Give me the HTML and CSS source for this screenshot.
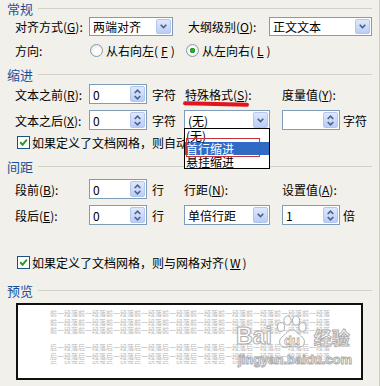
FILE: index.html
```html
<!DOCTYPE html>
<html lang="zh-CN">
  <head>
    <meta charset="UTF-8" />
    <link rel="stylesheet" href="styles.css">
    <title>段落</title>
  </head>
  <body>
    <div class="dlg">
      <div class="title">常规</div>
      <div class="row gen1">
        <span class="lbl">对齐方式(<u>G</u>):</span>
        <div class="select w84"><span>两端对齐</span><i class="drop"><svg width="7" height="5"><path d="M0.7 0.7 L3.5 3.6 L6.3 0.7" /></svg></i></div>
        <span class="lbl2">大纲级别(<u>O</u>):</span>
        <div class="select w103"><span>正文文本</span><i class="drop"><svg width="7" height="5"><path d="M0.7 0.7 L3.5 3.6 L6.3 0.7" /></svg></i></div>
      </div>
      <div class="row gen2">
        <span class="lbl">方向:</span>
        <span class="radio r1"><i></i>从右向左(<u>F</u>)</span>
        <span class="radio on"><i></i>从左向右(<u>L</u>)</span>
      </div>

      <div class="title t-indent">缩进</div>
      <div class="grid indent">
        <span>文本之前(<u>R</u>):</span>
        <div class="spin"><span>0</span><i class="arrows"><svg width="7" height="11"><path d="M0.7 4 L3.5 1.2 L6.3 4 M0.7 7 L3.5 9.8 L6.3 7" /></svg></i></div>
        <span class="unit">字符</span>
        <span class="mark">特殊格式(<u>S</u>):</span>
        <span class="wide">度量值(<u>Y</u>):</span>

        <span>文本之后(<u>X</u>):</span>
        <div class="spin"><span>0</span><i class="arrows"><svg width="7" height="11"><path d="M0.7 4 L3.5 1.2 L6.3 4 M0.7 7 L3.5 9.8 L6.3 7" /></svg></i></div>
        <span class="unit">字符</span>
        <div class="combo">
          <div class="select"><span>(无)</span><i class="drop"><svg width="7" height="5"><path d="M0.7 0.7 L3.5 3.6 L6.3 0.7" /></svg></i></div>
          <ul class="list">
            <li>(无)</li>
            <li class="sel">首行缩进</li>
            <li>悬挂缩进</li>
          </ul>
          <div class="redbox"></div>
        </div>
        <div class="spin"><span></span><i class="arrows"><svg width="7" height="11"><path d="M0.7 4 L3.5 1.2 L6.3 4 M0.7 7 L3.5 9.8 L6.3 7" /></svg></i></div>
        <span class="unit u2">字符</span>
      </div>
      <div class="check c1"><i><svg width="9" height="9"><path d="M1.2 4.2 L3.6 6.8 L7.8 1.6" /></svg></i><span class="clip">如果定义了文档网格，则自动调整右缩进(<u>D</u>)</span></div>

      <div class="title t-space">间距</div>
      <div class="grid spacing">
        <span>段前(<u>B</u>):</span>
        <div class="spin"><span>0</span><i class="arrows"><svg width="7" height="11"><path d="M0.7 4 L3.5 1.2 L6.3 4 M0.7 7 L3.5 9.8 L6.3 7" /></svg></i></div>
        <span class="unit">行</span>
        <span>行距(<u>N</u>):</span>
        <span class="wide">设置值(<u>A</u>):</span>

        <span>段后(<u>E</u>):</span>
        <div class="spin"><span>0</span><i class="arrows"><svg width="7" height="11"><path d="M0.7 4 L3.5 1.2 L6.3 4 M0.7 7 L3.5 9.8 L6.3 7" /></svg></i></div>
        <span class="unit">行</span>
        <div class="select"><span>单倍行距</span><i class="drop"><svg width="7" height="5"><path d="M0.7 0.7 L3.5 3.6 L6.3 0.7" /></svg></i></div>
        <div class="spin"><span>1</span><i class="arrows"><svg width="7" height="11"><path d="M0.7 4 L3.5 1.2 L6.3 4 M0.7 7 L3.5 9.8 L6.3 7" /></svg></i></div>
        <span class="unit u2">倍</span>
      </div>
      <div class="check c2"><i><svg width="9" height="9"><path d="M1.2 4.2 L3.6 6.8 L7.8 1.6" /></svg></i>如果定义了文档网格，则与网格对齐(<u>W</u>)</div>

      <div class="title t-preview">预览</div>
      <div class="preview">
        <div class="lines">
          <p>前一段落前一段落前一段落前一段落前一段落前一段落前一段落前一段落前一段落前一段落</p>
          <p>前一段落前一段落前一段落前一段落前一段落前一段落前一段落前一段落前一段落前一段落</p>
          <p>前一段落前一段落前一段落前一段落前一段落前一段落前一段落前一段落前一段落前一段落</p>
        </div>
        <div class="lines after">
          <p>后一段落后一段落后一段落后一段落后一段落后一段落后一段落后一段落后一段落后一段落</p>
          <p>后一段落后一段落后一段落后一段落后一段落后一段落后一段落后一段落后一段落后一段落</p>
          <p>后一段落后一段落后一段落后一段落后一段落后一段落后一段落后一段落后一段落后一段落</p>
        </div>
        <!-- watermark over the preview -->
        <div class="wm">
          <div class="wm-top">
            <span class="bai">Bai</span>
            <svg class="paw" width="34" height="33" viewBox="0 0 34 33">
              <ellipse cx="6" cy="12" rx="3.6" ry="4.4" />
              <ellipse cx="12.5" cy="5.5" rx="3.6" ry="4.6" />
              <ellipse cx="21" cy="5.5" rx="3.6" ry="4.6" />
              <ellipse cx="27.5" cy="12" rx="3.6" ry="4.4" />
              <path d="M17 15 C21 15 23 19 27 22 C31 25 30 32 24 32 C21 32 19 31 17 31 C15 31 13 32 10 32 C4 32 3 25 7 22 C11 19 13 15 17 15 Z" />
              <text x="17" y="30" text-anchor="middle">du</text>
            </svg>
            <span class="jy">经验</span>
          </div>
          <div class="wm-url">jingyan.baidu.com</div>
        </div>
      </div>
    </div>
  </body>
</html>
```

FILE: styles.css
```css
* {
  box-sizing: border-box;
}
body {
  margin: 0;
  background-color: #f1f0ea;
  font: 12px "Noto Sans CJK SC", "Liberation Sans", sans-serif;
  color: #000;
}
u {
  text-decoration: underline;
}
.dlg {
  width: 380px;
  height: 386px;
  border-right: 1px solid #d2d0c6;
  position: relative;
  overflow: hidden;
}

/* group titles with the rule to the right */
.title {
  display: flex;
  align-items: center;
  height: 17px;
  padding-left: 7px;
  color: #1b4f9c;
  font-size: 13px;
}
.title::after {
  content: "";
  flex: 1;
  border-top: 1px solid #d3d1c6;
  margin: 0 7px 0 5px;
}
.t-indent {
  margin-top: 6px;
}
.t-space {
  margin-top: 7px;
}
.t-preview {
  margin-top: 11px;
}

.row {
  display: flex;
  align-items: center;
  padding-left: 15px;
}
.gen1 {
  height: 19px;
}
.gen1 .lbl {
  width: 74px;
}
.lbl2 {
  width: 81px;
  margin-left: 15px;
}
.w84 {
  width: 84px;
}
.w103 {
  width: 103px;
}
.gen2 {
  height: 20px;
  margin-top: 4px;
}
.gen2 .lbl {
  width: 74px;
}

/* controls */
.select,
.spin {
  height: 100%;
  border: 1px solid #7f9db9;
  background-color: #fff;
  display: flex;
  align-items: center;
  padding: 1px 1px 1px 3px;
}
.select span,
.spin span {
  flex: 1;
  white-space: nowrap;
}
.drop,
.arrows {
  width: 15px;
  height: 100%;
  border: 1px solid #b3c6f0;
  border-radius: 2px;
  background: linear-gradient(#dfe8fd, #b9cdf7);
  display: flex;
  align-items: center;
  justify-content: center;
}
.drop path,
.arrows path {
  stroke: #4d6185;
  stroke-width: 1.6;
  fill: none;
}

.radio {
  display: flex;
  align-items: center;
  gap: 3px;
}
.r1 {
  width: 96px;
  margin-left: 1px;
}
.radio i {
  width: 13px;
  height: 13px;
  border-radius: 50%;
  border: 1px solid #8b98ab;
  background: radial-gradient(circle at 60% 60%, #fff 30%, #dcdcd4);
}
.radio.on i {
  background: radial-gradient(circle, #35b535 0, #1f9a1f 2.5px, #fff 3px, #e4e4dc);
}

/* indent / spacing grids */
.grid {
  display: grid;
  grid-template-columns: 74px 58px 37px 98px 58px auto;
  grid-auto-rows: 20px;
  row-gap: 6px;
  align-items: center;
  padding-left: 15px;
}
.indent {
  margin-top: 1px;
}
.spacing {
  margin-top: 4px;
}
.grid > .spin,
.grid > .select,
.combo {
  align-self: stretch;
}
.grid .select,
.combo {
  width: 86px;
}
.unit {
  padding-left: 5px;
}
.u2 {
  padding-left: 3px;
}
.wide {
  grid-column: span 2;
}
.mark {
  position: relative;
  align-self: stretch;
  display: flex;
  align-items: center;
  padding-left: 1px;
}
.mark::after {
  content: "";
  position: absolute;
  left: -1px;
  top: 18px;
  width: 66px;
  height: 4px;
  border-radius: 2px;
  background-color: #e3141c;
  transform: rotate(1.5deg);
}

.combo {
  position: relative;
}
.combo .select {
  height: 100%;
}
.list {
  position: absolute;
  z-index: 2;
  top: 18px;
  left: 0;
  width: 86px;
  margin: 0;
  padding: 0;
  list-style: none;
  background-color: #fff;
  border: 1px solid #000;
}
.list li {
  height: 13px;
  line-height: 13px;
  padding-left: 1px;
}
.list .sel {
  background-color: #316ac5;
  color: #fff;
}
.redbox {
  position: absolute;
  z-index: 3;
  left: 2px;
  top: 28px;
  width: 74px;
  height: 19px;
  border: 1px solid #c8323a;
}

.check {
  display: flex;
  align-items: center;
  gap: 2px;
  height: 18px;
  padding-left: 17px;
  white-space: nowrap;
}
.c1 {
  margin-top: 3px;
}
.c2 {
  margin-top: 28px;
}
/* the rest of the label sits under the open list */
.clip {
  width: 153px;
  overflow: hidden;
}
.check i {
  width: 13px;
  height: 13px;
  border: 1px solid #1c5180;
  background-color: #fff;
  display: flex;
  align-items: center;
  justify-content: center;
}
.check path {
  stroke: #21a121;
  stroke-width: 2;
  fill: none;
}

/* preview */
.preview {
  position: relative;
  margin: 4px 0 0 16px;
  width: 347px;
  height: 77px;
  border: 2px solid #111;
  background-color: #fff;
  padding: 4px 0 0 32px;
}
.lines p {
  margin: 0;
  width: 281px;
  height: 8.5px;
  line-height: 8.5px;
  font-size: 7px;
  color: #b9b9b9;
  white-space: nowrap;
}
.after {
  margin-top: 8.5px;
  height: 21px;
  overflow: hidden;
}

.wm {
  position: absolute;
  left: 218px;
  top: 9px;
  font-family: "Liberation Sans", sans-serif;
  font-weight: bold;
}
.wm-top {
  display: flex;
  align-items: flex-end;
  height: 34px;
}
.bai,
.jy,
.wm-url {
  color: rgba(255, 255, 255, 0.85);
  -webkit-text-stroke: 1px #adadad;
}
.bai {
  font-size: 23px;
  line-height: 23px;
}
.jy {
  font-family: "Noto Sans CJK SC", sans-serif;
  font-size: 18px;
  line-height: 22px;
  margin-left: 5px;
}
.paw {
  margin-left: 3px;
}
.paw ellipse,
.paw path {
  fill: rgba(255, 255, 255, 0.85);
  stroke: #adadad;
  stroke-width: 1;
}
.paw text {
  font-size: 13px;
  font-weight: bold;
  fill: rgba(255, 255, 255, 0.9);
  stroke: #adadad;
  stroke-width: 0.8;
}
.wm-url {
  font-size: 13px;
  line-height: 13px;
  margin-top: 5px;
  margin-left: 2px;
}
```
